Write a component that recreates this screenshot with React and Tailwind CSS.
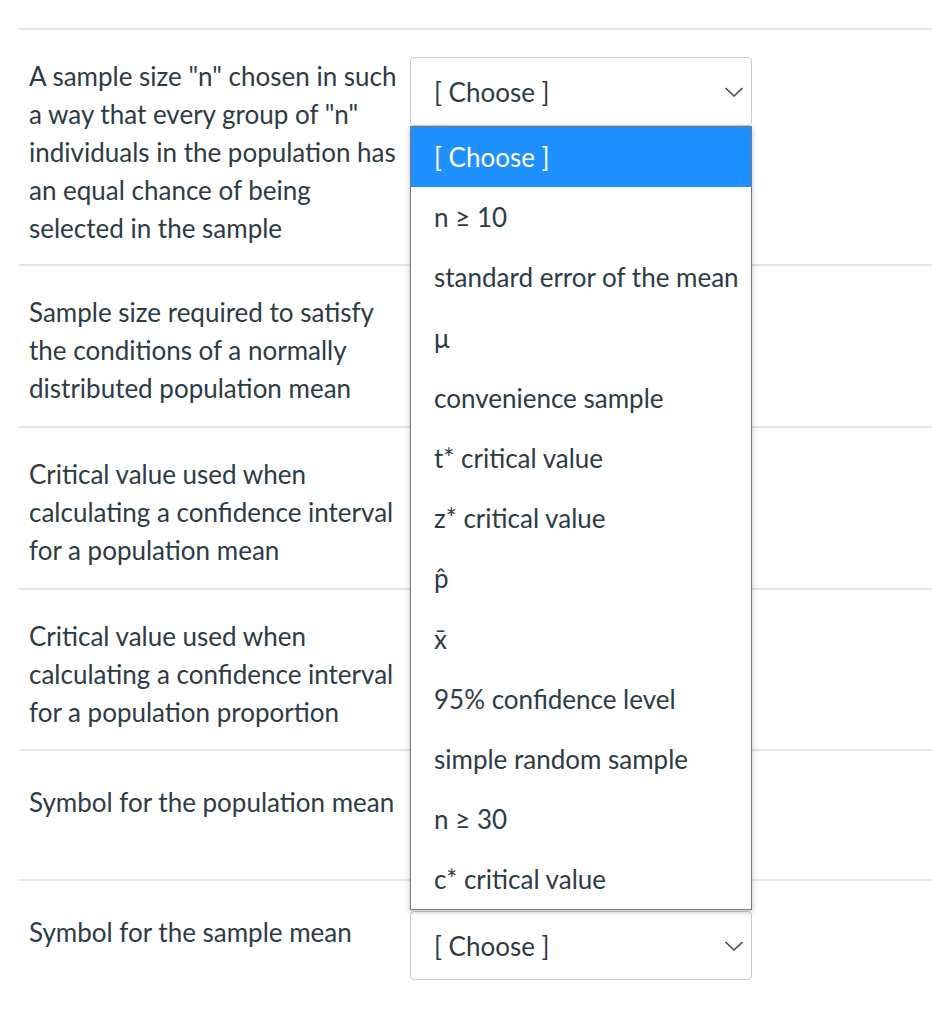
import { useState } from "react";

const rows = [
  {
    label:
      'A sample size "n" chosen in such a way that every group of "n" individuals in the population has an equal chance of being selected in the sample',
    multi: true,
    open: true,
    pb: "pb-[17px]",
  },
  { label: "Sample size required to satisfy the conditions of a normally distributed population mean", multi: true, pb: "pb-[19px]" },
  { label: "Critical value used when calculating a confidence interval for a population mean", multi: true, pb: "pb-[19px]" },
  { label: "Critical value used when calculating a confidence interval for a population proportion", multi: true, pb: "pb-[18px]" },
  { label: "Symbol for the population mean", multi: false, tall: true, pb: "pb-[19px]" },
  { label: "Symbol for the sample mean", multi: false, pb: "pb-[19px]" },
];

const options = [
  "[ Choose ]",
  "n ≥ 10",
  "standard error of the mean",
  "μ",
  "convenience sample",
  "t* critical value",
  "z* critical value",
  "p̂",
  "x̄",
  "95% confidence level",
  "simple random sample",
  "n ≥ 30",
  "c* critical value",
];

function Chevron() {
  return (
    <svg width="20" height="12" viewBox="0 0 20 12" className="shrink-0">
      <path d="M1.5 2 L10 10 L18.5 2" fill="none" stroke="#3b4a55" strokeWidth="1.6" />
    </svg>
  );
}

function Select({ open }) {
  const [active] = useState(0);
  return (
    <div className="relative w-[342px]">
      <div className="flex h-[69px] items-center justify-between rounded-[4px] border border-[#c7cdd1] bg-white pl-[23px] pr-[7px]">
        <span>[ Choose ]</span>
        <Chevron />
      </div>
      {open && (
        <ul className="absolute left-0 top-[69px] z-10 w-[342px] border border-[#7a7a7a] bg-white shadow-[0_2px_6px_rgba(0,0,0,0.25)]">
          {options.map((o, i) => (
            <li
              key={o}
              className={
                "flex h-[60.2px] items-center pl-[23px] whitespace-nowrap " +
                (i === active ? "bg-[#1e90ff] text-white" : "")
              }
            >
              {o}
            </li>
          ))}
        </ul>
      )}
    </div>
  );
}

export default function App() {
  return (
    <div
      className="min-h-screen bg-white pt-[28px] pl-[19px] text-[26px] leading-[38px] text-[#2d3b45]"
      style={{ fontFamily: "Lato, 'Noto Sans', sans-serif" }}
    >
      {rows.map((r, i) => (
        <div key={i} className={"flex border-t-2 border-[#e3e5e7] pt-[27px] " + r.pb}>
          <div className={"w-[391px] shrink-0 pl-[10px] pr-[8px] " + (r.multi ? "" : "mt-[5px]")}>{r.label}</div>
          <div className={r.multi ? "mt-[0px]" : r.tall ? "mt-[-4px] mb-[17px]" : "mt-[3px] mb-[14px]"}>
            <Select open={r.open} />
          </div>
        </div>
      ))}
    </div>
  );
}
